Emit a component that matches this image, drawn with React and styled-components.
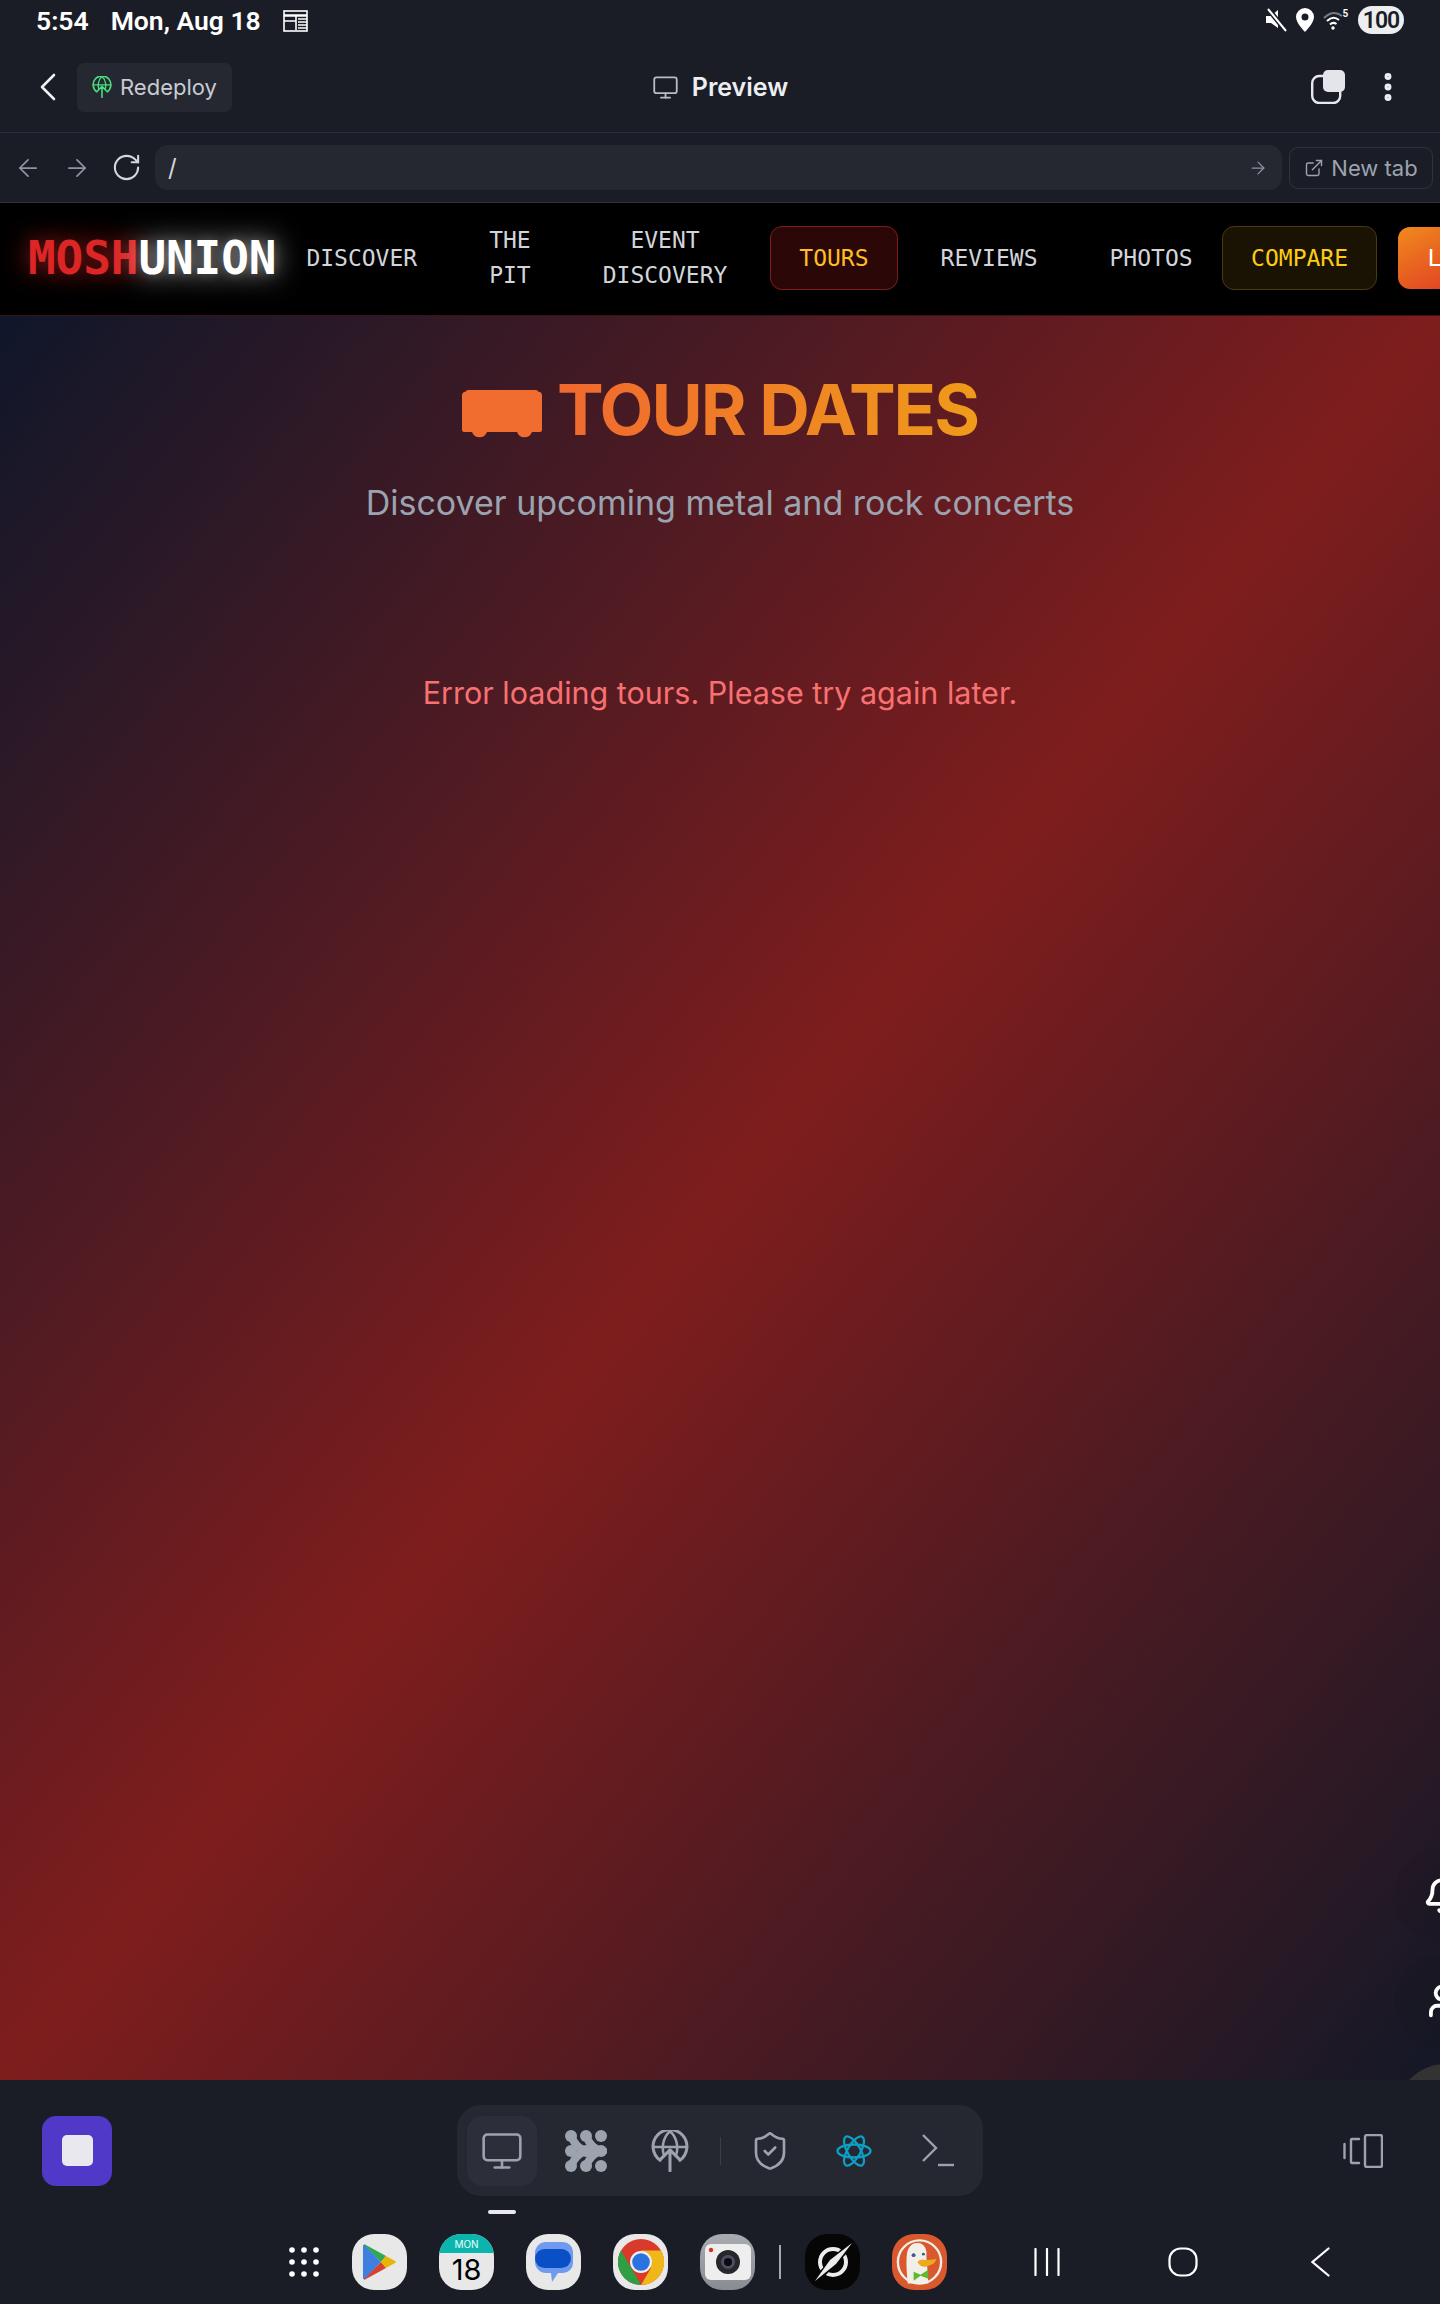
import React from "react";
import styled, { createGlobalStyle } from "styled-components";
import { ChevronLeft, Monitor, ArrowLeft, ArrowRight, RotateCw, ExternalLink, Bell, User, ShieldCheck, EllipsisVertical } from "lucide-react";

const Global = createGlobalStyle`
  html, body { margin: 0; padding: 0; background: #1a1d26; }
  * { box-sizing: border-box; }
  body { font-family: Inter, "Liberation Sans", sans-serif; }
`;

const Frame = styled.div`
  position: relative;
  width: 1440px;
  height: 2304px;
  display: flex;
  flex-direction: column;
  overflow: hidden;
  background: #1a1d26;
`;

const StatusBar = styled.div`
  height: 42px;
  display: flex;
  align-items: center;
  justify-content: space-between;
  padding: 0 36px 2px 36px;
  color: #fff;
  font-family: Roboto, sans-serif;
  font-weight: 600;
  font-size: 26.5px;
`;
const StatusLeft = styled.div`
  display: flex;
  align-items: center;
  gap: 22px;
`;
const StatusRight = styled.div`
  display: flex;
  align-items: center;
  gap: 9px;
`;
const Battery = styled.div`
  width: 46px;
  height: 28px;
  border-radius: 14px;
  background: #eceef0;
  color: #1a1d26;
  display: flex;
  align-items: center;
  justify-content: center;
  font-size: 23px;
  font-weight: 600;
  letter-spacing: -1px;
`;

const TopBar = styled.div`
  height: 91px;
  display: grid;
  grid-template-columns: 1fr auto 1fr;
  align-items: center;
  padding: 0 36px;
  border-bottom: 1px solid #2a2e38;
`;
const TopLeft = styled.div`
  display: flex;
  align-items: center;
  gap: 5px;
  margin-left: -12px;
  color: #eef0f2;
`;
const Pill = styled.div`
  width: 155px;
  height: 49px;
  border-radius: 7px;
  background: #252831;
  display: flex;
  align-items: center;
  gap: 7px;
  padding-left: 14px;
  color: #c9ccd3;
  font-size: 22px;
`;
const Title = styled.div`
  display: flex;
  align-items: center;
  gap: 13px;
  font-size: 25px;
  font-weight: 600;
  color: #eceef1;
`;
const TopRight = styled.div`
  display: flex;
  align-items: center;
  justify-content: flex-end;
  gap: 25px;
  margin-right: -2px;
  color: #eceef1;
`;

const AddressRow = styled.div`
  height: 70px;
  display: flex;
  align-items: center;
  padding: 0 7px 0 14px;
  border-bottom: 1px solid #2f333d;
  color: #8f94a0;
`;
const NavArrow = styled.span`
  display: flex;
  margin-right: ${(p) => p.$mr || 0}px;
  color: ${(p) => p.$color || "#8f94a0"};
`;
const Address = styled.div`
  flex: 1;
  height: 45px;
  margin-right: 7px;
  border-radius: 13px;
  background: #252831;
  display: flex;
  align-items: center;
  justify-content: space-between;
  padding: 0 14px 0 13px;
  color: #d5d7dc;
  font-size: 24px;
`;
const NewTab = styled.div`
  width: 144px;
  height: 42px;
  border: 1px solid #2f333d;
  border-radius: 9px;
  display: flex;
  align-items: center;
  justify-content: center;
  gap: 7px;
  color: #9ca3af;
  font-size: 22px;
`;

const SiteNav = styled.nav`
  height: 113px;
  background: #000;
  display: flex;
  align-items: center;
  padding: 0 0 2px 28px;
  overflow: hidden;
  font-family: "DejaVu Sans Mono", monospace;
  font-size: 23px;
  border-bottom: 1px solid #3a1216;
`;
const Logo = styled.div`
  font-weight: 700;
  font-size: 46px;
  white-space: nowrap;
  flex: none;
  margin-right: 1px;
  letter-spacing: -0.1px;
`;
const LogoRed = styled.span`
  color: #dc2626;
  text-shadow: 0 0 24px rgba(220, 38, 38, 0.8);
`;
const LogoWhite = styled.span`
  color: #fff;
  text-shadow: 0 0 28px rgba(255, 255, 255, 0.75), 0 0 12px rgba(255, 255, 255, 0.2);
`;
const NavItem = styled.a`
  flex: none;
  height: 64px;
  padding: 0 28px;
  margin-right: ${(p) => p.$mr ?? 14}px;
  display: flex;
  align-items: center;
  justify-content: center;
  text-align: center;
  line-height: 35px;
  border-radius: 12px;
  color: ${(p) => p.$color || "#d1d5db"};
  background: ${(p) => p.$bg || "transparent"};
  border: 1px solid ${(p) => p.$border || "transparent"};
`;
const LoginButton = styled.a`
  flex: none;
  width: 120px;
  height: 62px;
  padding-left: 30px;
  display: flex;
  align-items: center;
  border-radius: 12px;
  color: #fff;
  margin-left: 6.5px;
  background: linear-gradient(to bottom right, #f08a1d, #dc2626);
`;

const Main = styled.main`
  position: relative;
  height: 1764px;
  flex: none;
  overflow: hidden;
  background: linear-gradient(to bottom right, #0f172a, #7f1d1d, #141827);
  text-align: center;
`;
const Heading = styled.div`
  padding-top: 54px;
  height: 132px;
  display: flex;
  justify-content: center;
  align-items: flex-start;
  gap: 15px;
`;
const HeadingText = styled.h1`
  margin: 0;
  font-family: Inter, sans-serif;
  font-size: 70px;
  line-height: 80px;
  font-weight: 700;
  letter-spacing: -2px;
  background: linear-gradient(to right, #f0682f, #ef9b1a);
  -webkit-background-clip: text;
  background-clip: text;
  color: transparent;
`;
const BusWrap = styled.span`
  display: flex;
  margin-top: 20px;
`;
const Subtitle = styled.p`
  margin: 34px 0 0;
  font-size: 34px;
  line-height: 42px;
  color: #9ca3af;
`;
const ErrorText = styled.p`
  margin: 148px 0 0;
  font-size: 30.5px;
  line-height: 42px;
  color: #f87171;
`;
const Floating = styled.div`
  position: absolute;
  right: -50px;
  top: 1532px;
  display: flex;
  flex-direction: column;
  gap: 9px;
`;
const FloatBtn = styled.div`
  width: 96px;
  height: 96px;
  border-radius: 50%;
  background: rgba(0, 0, 0, 0.04);
  display: flex;
  align-items: center;
  justify-content: center;
  color: #fff;
`;
const GreyDisc = styled.div`
  position: absolute;
  left: 1397px;
  top: 1748px;
  width: 96px;
  height: 96px;
  border-radius: 50%;
  background: #333;
`;

const Bottom = styled.div`
  flex: 1;
  display: flex;
  flex-direction: column;
`;
const ToolRow = styled.div`
  display: grid;
  grid-template-columns: 457px 526px 1fr;
  align-items: center;
  padding-top: 25px;
`;
const StopOuter = styled.div`
  width: 70px;
  height: 70px;
  margin-left: 42px;
  border-radius: 14px;
  background: #5038c8;
  display: flex;
  align-items: center;
  justify-content: center;
`;
const StopInner = styled.div`
  width: 31px;
  height: 31px;
  border-radius: 5px;
  background: #e8e8ee;
`;
const Toolbar = styled.div`
  height: 91px;
  border-radius: 24px;
  background: #252831;
  display: flex;
  align-items: center;
  padding-left: 10px;
`;
const ToolBtn = styled.div`
  width: 70px;
  height: 70px;
  border-radius: 16px;
  margin-right: 14px;
  flex: none;
  display: flex;
  align-items: center;
  justify-content: center;
  color: ${(p) => p.$color || "#9ca3af"};
  background: ${(p) => (p.$active ? "#2c2f3a" : "transparent")};
`;
const ToolDivider = styled.div`
  width: 1px;
  height: 28px;
  margin: 0 14px 0 1px;
  background: #3a3e49;
  flex: none;
`;
const SideIcon = styled.div`
  display: flex;
  justify-content: flex-end;
  padding-right: 57px;
`;
const Underline = styled.div`
  width: 28px;
  height: 4px;
  margin: 14px 0 0 488px;
  border-radius: 2px;
  background: #e8e8ee;
`;
const Dock = styled.div`
  display: flex;
  align-items: center;
  height: 56px;
  margin-top: 20px;
  padding-left: 289px;
`;
const AppIcon = styled.div`
  position: relative;
  width: 55px;
  height: 56px;
  flex: none;
  margin-right: ${(p) => p.$mr ?? 32}px;
  border-radius: 40%;
  overflow: hidden;
  background: ${(p) => p.$bg || "#e8e8e8"};
  display: flex;
  align-items: center;
  justify-content: center;
`;
const GridSlot = styled.div`
  width: 30px;
  flex: none;
  display: flex;
  margin-right: 33px;
`;
const CalendarTop = styled.div`
  height: 19px;
  width: 100%;
  background: #0bb5ae;
  color: #e8fffd;
  font-family: Inter, sans-serif;
  font-size: 10px;
  line-height: 21px;
  text-align: center;
`;
const CalendarDay = styled.div`
  color: #000;
  font-family: Inter, sans-serif;
  font-size: 29px;
  line-height: 33px;
  text-align: center;
`;
const CalendarBody = styled.div`
  width: 100%;
  height: 100%;
  display: flex;
  flex-direction: column;
`;
const DockDivider = styled.div`
  width: 2px;
  height: 34px;
  margin-right: 24px;
  background: #a5a8ae;
`;
const SysNav = styled.div`
  display: flex;
  align-items: center;
  margin-left: 87px;
`;
const SysSlot = styled.span`
  display: flex;
  margin-right: ${(p) => p.$mr}px;
`;

const Bus = () => (
  <svg width="80" height="48" viewBox="0 0 80 48">
    <path fill="#f06c2f" d="M4 1.5 Q4 0 6 0 H74 Q76 0 76 1.5 L78 2 Q80 3 80 5 V40 Q80 42 78 42 H70 A8 8 0 0 1 55 42 H25 A8 8 0 0 1 10 42 H2 Q0 42 0 40 V5 Q0 3 2 2 Z" />
  </svg>
);
const Radar = ({ size, color }) => (
  <svg width={size} height={size} viewBox="0 0 32 36" fill="none" stroke={color} strokeWidth="2.6" strokeLinecap="round" strokeLinejoin="round">
    <path d="M7.5 26 A14.5 14.5 0 1 1 24.5 26" />
    <path d="M1.5 14.5 H30.5 M16 1 C9 7 9 17 11 22 M16 1 C23 7 23 17 21 22" strokeWidth="2.2" />
    <path d="M16 35 V17 M8.5 24.5 L16 17 L23.5 24.5" />
  </svg>
);
const Blobs = () => (
  <svg width="42" height="42" viewBox="0 0 42 42" fill="#9ca3af">
    {[[6,6],[21,6],[36,6],[6,21],[21,21],[36,21],[6,36],[21,36],[36,36]].map(([x, y]) => (
      <circle key={`${x}-${y}`} cx={x} cy={y} r="6" />
    ))}
    <g fill="none" stroke="#9ca3af" strokeWidth="8" strokeLinecap="round">
      <path d="M21 6 Q26 18 36 21 Q26 24 21 36" />
      <path d="M6 6 Q11 18 21 21 Q11 24 6 36" />
    </g>
  </svg>
);
const ReactLogo = () => (
  <svg width="36" height="34" viewBox="-18 -17 36 34" fill="none" stroke="#0e9fc4" strokeWidth="2.3">
    <ellipse rx="16.5" ry="6.5" />
    <ellipse rx="16.5" ry="6.5" transform="rotate(60)" />
    <ellipse rx="16.5" ry="6.5" transform="rotate(120)" />
  </svg>
);
const Terminal = () => (
  <svg width="32" height="34" viewBox="0 0 32 34" fill="none" stroke="#9ca3af" strokeWidth="2.4">
    <path d="M1 1 L14 14 L1 27" />
    <path d="M16 31 H32" />
  </svg>
);
const Dual = () => (
  <svg width="40" height="34" viewBox="0 0 40 34" fill="none" stroke="#9ca3af" strokeWidth="2.4" strokeLinecap="round">
    <path d="M1.5 10 V24" />
    <path d="M16 5 H9 Q8 5 8 6 V28 Q8 29 9 29 H16" />
    <rect x="22" y="1" width="17" height="32" rx="2" />
  </svg>
);
const Copy = () => (
  <svg width="34" height="34" viewBox="0 0 34 34">
    <rect x="1.2" y="6" width="28" height="27" rx="7" fill="none" stroke="#e8e8ee" strokeWidth="2.4" />
    <rect x="12" y="0" width="22" height="22" rx="5" fill="#e4e5ea" />
  </svg>
);
const Calendar = () => (
  <svg width="25" height="23" viewBox="0 0 25 23" fill="none" stroke="#fff" strokeWidth="1.6">
    <rect x="1" y="2" width="23" height="20" />
    <path d="M1 6.5 H24" strokeWidth="2.5" />
    <path d="M1 12 H13 M13 7 V21 M15 10 H24 M15 13 H24 M15 16 H24 M15 19 H24" />
  </svg>
);
const Muted = () => (
  <svg width="21" height="24" viewBox="0 0 21 24" fill="#fff">
    <path d="M0 8 H5 L12 2 V20 L5 15 H0 Z" />
    <path d="M3 2 L20 23" stroke="#1a1d26" strokeWidth="5" />
    <path d="M2 1 L20 23" stroke="#fff" strokeWidth="2" />
  </svg>
);
const Pin = () => (
  <svg width="18" height="24" viewBox="0 0 18 24">
    <path fill="#fff" fillRule="evenodd" d="M9 0 A9 9 0 0 1 18 9 C18 15 9 24 9 24 C9 24 0 15 0 9 A9 9 0 0 1 9 0 Z M9 5.5 A3.5 3.5 0 1 0 9 12.5 A3.5 3.5 0 1 0 9 5.5 Z" />
  </svg>
);
const Wifi = () => (
  <svg width="26" height="22" viewBox="0 0 26 22" fill="none">
    <path d="M1 9 Q10 0 19 7" stroke="#777b82" strokeWidth="2" />
    <path d="M4 12 Q10 6 16 11" stroke="#fff" strokeWidth="2" />
    <path d="M7 15.5 Q10 12.5 13.5 15" stroke="#fff" strokeWidth="2" />
    <circle cx="10" cy="19" r="1.7" fill="#fff" />
    <text x="19.5" y="8" fill="#fff" fontSize="10" fontFamily="Roboto, sans-serif">5</text>
  </svg>
);
const DotsGrid = () => (
  <svg width="30" height="30" viewBox="0 0 30 30" fill="#fff">
    {[3, 15, 27].flatMap((y) => [3, 15, 27].map((x) => <circle key={`${x}-${y}`} cx={x} cy={y} r="2.8" />))}
  </svg>
);
const Play = () => (
  <svg width="34" height="36" viewBox="0 0 34 36">
    <path fill="#3f7fe0" d="M0 2 Q0 0 2 1 L18 18 L2 35 Q0 36 0 34 Z" />
    <path fill="#32a852" d="M1 0.5 Q2 0 3 1 L23 12 L18 18 Z" />
    <path fill="#d9412f" d="M1 35.5 Q2 36 3 35 L23 24 L18 18 Z" />
    <path fill="#eab308" d="M23 12 L32 17 Q34 18 32 19 L23 24 L18 18 Z" />
  </svg>
);
const Messages = () => (
  <svg width="40" height="42" viewBox="0 0 40 42">
    <path fill="#6f9af0" d="M12 1 H29 A10 10 0 0 1 39 11 V22 A10 10 0 0 1 29 32 H24 L18 41 L17 32 H12 A11 11 0 0 1 1 21 V12 A11 11 0 0 1 12 1 Z" />
    <rect x="1" y="8" width="36" height="19" rx="9.5" fill="#0a4fc4" />
  </svg>
);
const Chrome = () => (
  <svg width="46" height="46" viewBox="0 0 46 46">
    <circle cx="23" cy="23" r="23" fill="#d93a2b" />
    <path fill="#2f9e44" d="M23 46 A23 23 0 0 1 3 11.5 L15 32 Z" />
    <path fill="#efb717" d="M43 11.5 A23 23 0 0 1 23 46 L33 29 L23 11.5 Z" />
    <circle cx="23" cy="23" r="11" fill="#eee" />
    <circle cx="23" cy="23" r="8.8" fill="#2a72e0" />
  </svg>
);
const Camera = () => (
  <svg width="46" height="36" viewBox="0 0 46 36">
    <rect width="46" height="36" rx="6" fill="#eeeeee" />
    <circle cx="6" cy="6" r="2.2" fill="#d93025" />
    <circle cx="23" cy="18" r="12" fill="#26272b" />
    <circle cx="23" cy="18" r="7" fill="#4b4e66" />
    <circle cx="23" cy="18" r="4" fill="#0b0b0d" />
  </svg>
);
const Nova = () => (
  <svg width="44" height="44" viewBox="0 0 44 44" fill="none">
    <circle cx="22" cy="22" r="13" stroke="#ececec" strokeWidth="4" />
    <path d="M41 3 L4 41" stroke="#060606" strokeWidth="7" />
    <path d="M41 3 L25 24 L4 41 L19 20 Z" fill="#ececec" />
  </svg>
);
const Duck = () => (
  <svg width="56" height="56" viewBox="0 0 56 56">
    <circle cx="28" cy="28" r="22" fill="none" stroke="#f2efe9" strokeWidth="2.4" />
    <path fill="#f2efe9" d="M16 50 Q13 20 17 14 Q21 7 29 9 Q36 12 35 22 Q36 34 37 50 Z" />
    <circle cx="22" cy="21" r="2" fill="#3a5a90" />
    <circle cx="32" cy="20" r="1.5" fill="#3a5a90" />
    <path fill="#eea91c" d="M26 28 Q28 24 34 26 Q40 26 45 25 Q44 30 39 31 Q30 36 26 28 Z" />
    <path fill="#5fb733" d="M22 38 L29 41 L37 36 V45 L29 42 L22 47 Z" />
  </svg>
);

export default function App() {
  return (
    <Frame>
      <Global />
      <StatusBar>
        <StatusLeft>
          <span>5:54</span>
          <span>Mon, Aug 18</span>
          <Calendar />
        </StatusLeft>
        <StatusRight>
          <Muted />
          <Pin />
          <Wifi />
          <Battery>100</Battery>
        </StatusRight>
      </StatusBar>

      <TopBar>
        <TopLeft>
          <ChevronLeft size={48} strokeWidth={1.3} />
          <Pill>
            <Radar size={22} color="#4ade80" />
            <span>Redeploy</span>
          </Pill>
        </TopLeft>
        <Title>
          <Monitor size={27} strokeWidth={1.6} color="#b9bcc4" />
          Preview
        </Title>
        <TopRight>
          <Copy />
          <EllipsisVertical size={36} strokeWidth={2.6} />
        </TopRight>
      </TopBar>

      <AddressRow>
        <NavArrow $mr={21}><ArrowLeft size={28} strokeWidth={1.5} /></NavArrow>
        <NavArrow $mr={20}><ArrowRight size={28} strokeWidth={1.5} /></NavArrow>
        <NavArrow $mr={13} $color="#d5d7dc"><RotateCw size={31} strokeWidth={1.6} /></NavArrow>
        <Address>
          <span>/</span>
          <ArrowRight size={20} strokeWidth={1.5} color="#8f94a0" />
        </Address>
        <NewTab>
          <ExternalLink size={20} strokeWidth={1.7} />
          New tab
        </NewTab>
      </AddressRow>

      <SiteNav>
        <Logo>
          <LogoRed>MOSH</LogoRed>
          <LogoWhite>UNION</LogoWhite>
        </Logo>
        <NavItem>DISCOVER</NavItem>
        <NavItem>THE<br />PIT</NavItem>
        <NavItem>EVENT<br />DISCOVERY</NavItem>
        <NavItem $color="#fbbf24" $bg="#2b0707" $border="#7f1d1d">TOURS</NavItem>
        <NavItem>REVIEWS</NavItem>
        <NavItem $mr={0.5}>PHOTOS</NavItem>
        <NavItem $color="#facc15" $bg="#1a1203" $border="#4a3a10">COMPARE</NavItem>
        <LoginButton>L</LoginButton>
      </SiteNav>

      <Main>
        <Heading>
          <BusWrap><Bus /></BusWrap>
          <HeadingText>TOUR DATES</HeadingText>
        </Heading>
        <Subtitle>Discover upcoming metal and rock concerts</Subtitle>
        <ErrorText>Error loading tours. Please try again later.</ErrorText>
        <Floating>
          <FloatBtn><Bell size={38} strokeWidth={2.4} /></FloatBtn>
          <FloatBtn><User size={38} strokeWidth={2.4} /></FloatBtn>
        </Floating>
        <GreyDisc />
      </Main>

      <Bottom>
        <ToolRow>
          <StopOuter><StopInner /></StopOuter>
          <Toolbar>
            <ToolBtn $active><Monitor size={44} strokeWidth={1.4} /></ToolBtn>
            <ToolBtn><Blobs /></ToolBtn>
            <ToolBtn><Radar size={42} color="#9ca3af" /></ToolBtn>
            <ToolDivider />
            <ToolBtn><ShieldCheck size={42} strokeWidth={1.5} /></ToolBtn>
            <ToolBtn><ReactLogo /></ToolBtn>
            <ToolBtn><Terminal /></ToolBtn>
          </Toolbar>
          <SideIcon><Dual /></SideIcon>
        </ToolRow>
        <Underline />
        <Dock>
          <GridSlot><DotsGrid /></GridSlot>
          <AppIcon><Play /></AppIcon>
          <AppIcon>
            <CalendarBody>
              <CalendarTop>MON</CalendarTop>
              <CalendarDay>18</CalendarDay>
            </CalendarBody>
          </AppIcon>
          <AppIcon><Messages /></AppIcon>
          <AppIcon><Chrome /></AppIcon>
          <AppIcon $bg="linear-gradient(#a8abb0, #888c92)" $mr={24}><Camera /></AppIcon>
          <DockDivider />
          <AppIcon $bg="#060606"><Nova /></AppIcon>
          <AppIcon $bg="#d9582e" $mr={0}><Duck /></AppIcon>
          <SysNav>
            <SysSlot $mr={108}>
              <svg width="26" height="28" viewBox="0 0 26 28" stroke="#fff" strokeWidth="2.2" strokeLinecap="round">
                <path d="M1.5 1 V27 M13 1 V27 M24.5 1 V27" />
              </svg>
            </SysSlot>
            <SysSlot $mr={113}>
              <svg width="30" height="30" viewBox="0 0 30 30" fill="none" stroke="#fff" strokeWidth="2.2">
                <rect x="1.5" y="1.5" width="27" height="27" rx="11" />
              </svg>
            </SysSlot>
            <SysSlot $mr={0}>
              <svg width="19" height="30" viewBox="0 0 19 30" fill="none" stroke="#fff" strokeWidth="2.2" strokeLinecap="round">
                <path d="M17.5 1.5 L1.5 15 L17.5 28.5" />
              </svg>
            </SysSlot>
          </SysNav>
        </Dock>
      </Bottom>
    </Frame>
  );
}
